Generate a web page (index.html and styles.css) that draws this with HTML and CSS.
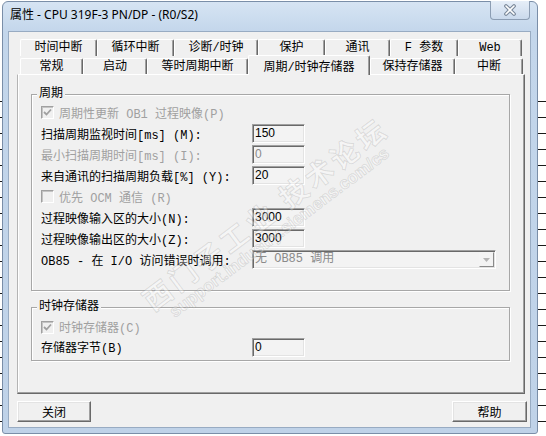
FILE: index.html
```html
<!DOCTYPE html>
<html lang="zh-CN">
<head>
  <meta charset="UTF-8">
  <title>属性 - CPU 319F-3 PN/DP - (R0/S2)</title>
  <link rel="stylesheet" href="styles.css">
</head>
<body>
  <div class="window">
    <div class="titlebar">
      <span class="title">属性 - CPU 319F-3 PN/DP - (R0/S2)</span>
      <div class="close">
        <svg width="40" height="18" viewBox="0 0 40 18">
          <path d="M16 5 L24 13 M24 5 L16 13" stroke="#7a889a" stroke-width="3.8" stroke-linecap="round"/>
          <path d="M16 5 L24 13 M24 5 L16 13" stroke="#fff" stroke-width="1.6" stroke-linecap="round"/>
        </svg>
      </div>
    </div>

    <div class="client">
      <!-- tabs, two rows -->
      <div class="tabrow back">
        <div class="tab">时间中断</div>
        <div class="tab">循环中断</div>
        <div class="tab">诊断/时钟</div>
        <div class="tab">保护</div>
        <div class="tab">通讯</div>
        <div class="tab">F 参数</div>
        <div class="tab">Web</div>
      </div>
      <div class="tabrow front">
        <div class="tab">常规</div>
        <div class="tab">启动</div>
        <div class="tab">等时周期中断</div>
        <div class="tab active">周期/时钟存储器</div>
        <div class="tab">保持存储器</div>
        <div class="tab">中断</div>
      </div>

      <div class="panel">
        <fieldset class="group">
          <legend>周期</legend>
          <div class="row dim">
            <span class="check"><svg width="11" height="11" viewBox="0 0 11 11"><path d="M2 5 L4.5 7.5 L9 2.5" fill="none" stroke="#a0a0a0" stroke-width="1.8"/></svg></span>
            周期性更新 OB1 过程映像(P)
          </div>
          <div class="row">
            <span class="label">扫描周期监视时间[ms] (M):</span>
            <span class="field">150</span>
          </div>
          <div class="row">
            <span class="label dim">最小扫描周期时间[ms] (I):</span>
            <span class="field dim">0</span>
          </div>
          <div class="row">
            <span class="label">来自通讯的扫描周期负载[%] (Y):</span>
            <span class="field">20</span>
          </div>
          <div class="row dim">
            <span class="check"></span>
            优先 OCM 通信 (R)
          </div>
          <div class="row">
            <span class="label">过程映像输入区的大小(N):</span>
            <span class="field">3000</span>
          </div>
          <div class="row">
            <span class="label">过程映像输出区的大小(Z):</span>
            <span class="field">3000</span>
          </div>
          <div class="row">
            <span class="label">OB85 - 在 I/O 访问错误时调用:</span>
            <span class="field select dim">
              <span class="value">无 OB85 调用</span>
              <span class="arrow"><svg width="7" height="4" viewBox="0 0 7 4"><path d="M0 0 H7 L3.5 4 Z" fill="#b4b4b4"/></svg></span>
            </span>
          </div>
        </fieldset>

        <fieldset class="group clock">
          <legend>时钟存储器</legend>
          <div class="row dim">
            <span class="check"><svg width="11" height="11" viewBox="0 0 11 11"><path d="M2 5 L4.5 7.5 L9 2.5" fill="none" stroke="#a0a0a0" stroke-width="1.8"/></svg></span>
            时钟存储器(C)
          </div>
          <div class="row">
            <span class="label">存储器字节(B)</span>
            <span class="field">0</span>
          </div>
        </fieldset>
      </div>

      <div class="buttons">
        <button class="btn">关闭</button>
        <button class="btn help">帮助</button>
      </div>
    </div>
  </div>

  <div class="watermark">
    <div class="wm-main">西门子工业 技术论坛</div>
    <div class="wm-sub">support.industry.siemens.com/cs</div>
  </div>
</body>
</html>
```

FILE: styles.css
```css
body {
  margin: 0;
  width: 546px;
  height: 436px;
  overflow: hidden;
  position: relative;
  font-family: "Liberation Mono", "Noto Sans CJK SC", monospace;
  font-size: 12px;
  color: #000;
  background:
    linear-gradient(#fff, #fff) 0 0 / 100% 100px no-repeat,
    repeating-linear-gradient(#fff 0 15px, #1a1a1a 15px 16px) 0 6px;
}

.window {
  margin: 1px 0 0 2px;
  width: 536px;
  height: 433px;
  box-sizing: border-box;
  border: 1px solid #7a8ea8;
  border-radius: 6px 6px 3px 3px;
  background: linear-gradient(#d6e4f3, #c3d6eb 30px, #bfd2e8);
  padding: 0 6px 5px 5px;
  display: flex;
  flex-direction: column;
}

.titlebar {
  height: 29px;
  display: flex;
  justify-content: space-between;
}

.title {
  font-family: "Noto Sans", "Noto Sans CJK SC", sans-serif;
  font-size: 12px;
  line-height: 26px;
  padding-left: 2px;
}

.close {
  width: 40px;
  height: 19px;
  box-sizing: border-box;
  margin: -1px 1px 0 0;
  border: 1px solid #8c9db3;
  border-top: none;
  border-radius: 0 0 4px 4px;
  background: linear-gradient(#e6eef8, #cad9ec);
}

.close svg {
  display: block;
  margin-left: -1px;
}

.client {
  flex: 1;
  border: 1px solid #98abc2;
  background: #f0f0f0;
  padding: 7px 5px 0 8px;
  display: flex;
  flex-direction: column;
}

.tabrow {
  display: flex;
  margin-left: 3px;
}

.back {
  height: 17px;
}

.front {
  height: 18px;
  align-items: flex-end;
  position: relative;
  z-index: 1;
}

.tab {
  box-sizing: border-box;
  height: 100%;
  border: 1px solid #fff;
  border-bottom: none;
  border-right-color: #696969;
  box-shadow: inset -1px 0 #a0a0a0;
  border-radius: 2px 2px 0 0;
  background: #f0f0f0;
  text-align: center;
  line-height: 17px;
  white-space: nowrap;
}

.back .tab:nth-child(1) { width: 77px; }
.back .tab:nth-child(2) { width: 77px; }
.back .tab:nth-child(3) { width: 84px; }
.back .tab:nth-child(4) { width: 67px; }
.back .tab:nth-child(5) { width: 65px; }
.back .tab:nth-child(6) { width: 68px; }
.back .tab:nth-child(7) { width: 64px; }

.front .tab { height: 16px; }
.front .tab:nth-child(1) { width: 63px; }
.front .tab:nth-child(2) { width: 64px; }
.front .tab:nth-child(3) { width: 101px; }
.front .tab:nth-child(4) { width: 122px; }
.front .tab:nth-child(5) { width: 85px; }
.front .tab:nth-child(6) { width: 68px; }

.front .tab.active {
  height: 20px;
  margin-bottom: -1px;
  line-height: 24px;
}

.panel {
  height: 320px;
  box-sizing: border-box;
  border: 1px solid;
  border-color: #fff #696969 #696969 #b4b4b4;
  box-shadow: inset -1px -1px #a0a0a0, inset 1px 0 #fff;
  padding: 11px 14px 0 13px;
}

.group {
  margin: 0;
  min-width: 0;
  padding: 0 0 20px 9px;
  border: 1px solid #a7a7a7;
  box-shadow: inset 1px 1px #fff, 1px 1px #fff;
}

.group legend {
  margin-left: -4px;
  padding: 0 2px;
  line-height: 16px;
  background: #f0f0f0;
}

.clock {
  margin-top: 8px;
  padding: 2px 0 3px 9px;
}

.row {
  display: flex;
  align-items: center;
  height: 21px;
  white-space: nowrap;
}

.clock .row {
  height: 20px;
}

.label {
  width: 211px;
  flex: none;
}

.dim {
  color: #a0a0a0;
}

.check {
  width: 13px;
  height: 13px;
  box-sizing: border-box;
  border: 1px solid;
  border-color: #a0a0a0 #fff #fff #a0a0a0;
  box-shadow: inset 1px 1px #c4c4c4;
  margin-right: 5px;
  display: flex;
  align-items: center;
  justify-content: center;
}

.field {
  width: 53px;
  height: 19px;
  box-sizing: border-box;
  border: 1px solid;
  border-color: #a0a0a0 #fff #fff #a0a0a0;
  box-shadow: inset 1px 1px #696969, inset -1px -1px #e3e3e3;
  background: #f3f3f3;
  padding-left: 2px;
  font-family: "Liberation Sans", sans-serif;
  font-size: 12px;
  line-height: 17px;
}

.field.dim {
  color: #8a8a8a;
}

.select {
  width: 244px;
  display: flex;
  align-items: center;
  font-family: "Liberation Mono", "Noto Sans CJK SC", monospace;
  color: #9a9a9a;
}

.select .arrow {
  margin: 0 1px 0 auto;
  width: 15px;
  height: 15px;
  box-sizing: border-box;
  border: 1px solid;
  border-color: #f4f4f4 #8a8a8a #8a8a8a #f4f4f4;
  display: flex;
  align-items: center;
  justify-content: center;
}

.buttons {
  display: flex;
  justify-content: space-between;
  margin-top: 7px;
}

.btn {
  width: 74px;
  height: 21px;
  box-sizing: border-box;
  border: 1px solid;
  border-color: #fff #696969 #696969 #fff;
  box-shadow: inset -1px -1px #a0a0a0, inset 1px 1px #e3e3e3;
  background: #f0f0f0;
  padding: 0;
  font-family: "Noto Sans CJK SC", sans-serif;
  font-size: 12px;
  line-height: 19px;
  color: #000;
}

.btn.help {
  width: 75px;
  margin-right: -2px;
}

/* faint forum watermark lying over the dialog */
.watermark {
  position: absolute;
  left: 270px;
  top: 220px;
  transform: translate(-50%, -50%) rotate(-37deg);
  text-align: center;
  white-space: nowrap;
  pointer-events: none;
  color: rgba(255, 255, 255, 0.35);
  -webkit-text-stroke: 1px rgba(90, 90, 90, 0.16);
}

.wm-main {
  font-family: "Noto Sans CJK SC", sans-serif;
  font-size: 28px;
  font-weight: 700;
  letter-spacing: 4px;
  line-height: 32px;
}

.wm-sub {
  font-family: "Liberation Sans", sans-serif;
  font-size: 17px;
  font-weight: 700;
  line-height: 18px;
}
```
